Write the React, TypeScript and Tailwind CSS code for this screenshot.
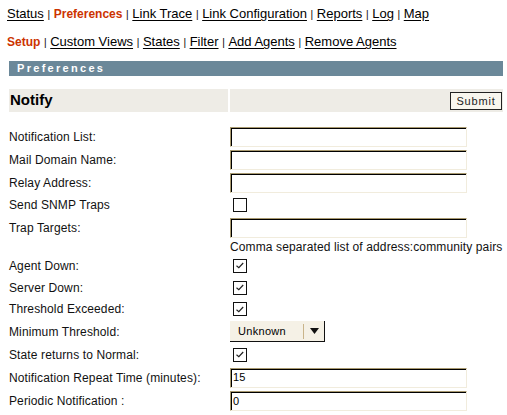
import React from 'react';

type Row =
  | { kind: 'text'; label: string; h: string; value?: string }
  | { kind: 'check'; label: string; h: string; checked: boolean }
  | { kind: 'select'; label: string; h: string; value: string }
  | { kind: 'note'; h: string; text: string };

const rows: Row[] = [
  { kind: 'text', label: 'Notification List:', h: 'h-[23px]' },
  { kind: 'text', label: 'Mail Domain Name:', h: 'h-[23px]' },
  { kind: 'text', label: 'Relay Address:', h: 'h-[23px]' },
  { kind: 'check', label: 'Send SNMP Traps', h: 'h-[22px]', checked: false },
  { kind: 'text', label: 'Trap Targets:', h: 'h-[24px]' },
  { kind: 'note', h: 'h-[14px]', text: 'Comma separated list of address:community pairs' },
  { kind: 'check', label: 'Agent Down:', h: 'h-[23px]', checked: true },
  { kind: 'check', label: 'Server Down:', h: 'h-[21px]', checked: true },
  { kind: 'check', label: 'Threshold Exceeded:', h: 'h-[22px]', checked: true },
  { kind: 'select', label: 'Minimum Threshold:', h: 'h-[23px]', value: 'Unknown' },
  { kind: 'check', label: 'State returns to Normal:', h: 'h-[23px]', checked: true },
  { kind: 'text', label: 'Notification Repeat Time (minutes):', h: 'h-[23px]', value: '15' },
  { kind: 'text', label: 'Periodic Notification :', h: 'h-[24px]', value: '0' },
];

const topNav = ['Status', 'Preferences', 'Link Trace', 'Link Configuration', 'Reports', 'Log', 'Map'];
const subNav = ['Setup', 'Custom Views', 'States', 'Filter', 'Add Agents', 'Remove Agents'];

function NavLine({ items, active }: { items: string[]; active: string }) {
  return (
    <div className="flex items-baseline whitespace-pre text-[13px] leading-[17px] text-black">
      {items.map((item, i) => (
        <React.Fragment key={item}>
          {i > 0 && (
            <span>
              {' '}
              <span className="text-[10px]">|</span>{' '}
            </span>
          )}
          {item === active ? (
            <span className="text-[12px] font-bold text-[#cc3300]">{item}</span>
          ) : (
            <a href="#" className="underline underline-offset-[2px]">
              {item}
            </a>
          )}
        </React.Fragment>
      ))}
    </div>
  );
}

function TextBox({ value }: { value?: string }) {
  return (
    <div className="flex h-[20px] w-[237px] items-center border border-[#a8996f] border-r-[#f1ecdd] border-b-[#f1ecdd] bg-white pl-[2px] text-[11px] text-black shadow-[inset_1px_1px_0_#000]">
      {value}
    </div>
  );
}

function CheckBox({ checked }: { checked: boolean }) {
  return (
    <div className="ml-[3px] flex h-[14px] w-[14px] items-center justify-center border border-[#111] bg-white">
      {checked && (
        <svg width="8" height="7" viewBox="0 0 8 7">
          <polyline points="0.5,3.8 2.8,5.6 7.2,1" fill="none" stroke="#222" strokeWidth="1.2" />
        </svg>
      )}
    </div>
  );
}

function Select({ value }: { value: string }) {
  return (
    <div className="flex h-[21px] w-[95px] items-center border-r border-b border-[#111] bg-[#f5f1e6] text-[11px] tracking-[0.3px] text-black">
      <span className="flex-1 pl-[8px]">{value}</span>
      <span className="h-[15px] w-px bg-[#c9b48a]" />
      <span className="flex w-[20px] justify-center">
        <svg width="9" height="6" viewBox="0 0 9 6">
          <polygon points="0,0 9,0 4.5,6" fill="#111" />
        </svg>
      </span>
    </div>
  );
}

export default function App() {
  return (
    <div className="h-[415px] w-[507px] bg-white font-['Liberation_Sans',Arial,sans-serif] text-[#111]">
      <nav className="pl-[7px] pt-[5px]">
        <NavLine items={topNav} active="Preferences" />
        <div className="mt-[10px]">
          <NavLine items={subNav} active="Setup" />
        </div>
      </nav>

      <div className="ml-[9px] mt-[10px] w-[494px]">
        <div className="flex h-[15px] items-center bg-[#6b8899] pl-[8px] text-[11px] font-bold tracking-[2.3px] text-white">
          Preferences
        </div>

        <div className="mt-[13px] flex h-[23px] gap-[2px]">
          <div className="flex w-[219px] items-center bg-[#eeece6] pl-[1px] text-[15px] font-bold text-black">
            Notify
          </div>
          <div className="flex flex-1 items-center justify-end bg-[#eeece6]">
            <button className="mr-[1px] h-[18px] w-[52px] border border-[#222] bg-[#f8f6ee] text-[11px] tracking-[0.8px] text-[#222]">
              Submit
            </button>
          </div>
        </div>

        <div className="mt-[13px] flex flex-col tracking-[0.12px]">
          {rows.map((row, i) => (
            <div key={i} className={`flex items-center ${row.h}`}>
              <div className="w-[221px] text-[12px] text-[#111]">
                {row.kind === 'note' ? '' : row.label}
              </div>
              <div className="flex items-center">
                {row.kind === 'text' && <TextBox value={row.value} />}
                {row.kind === 'check' && <CheckBox checked={row.checked} />}
                {row.kind === 'select' && <Select value={row.value} />}
                {row.kind === 'note' && (
                  <span className="whitespace-nowrap text-[12px] text-[#111]">{row.text}</span>
                )}
              </div>
            </div>
          ))}
        </div>
      </div>
    </div>
  );
}
